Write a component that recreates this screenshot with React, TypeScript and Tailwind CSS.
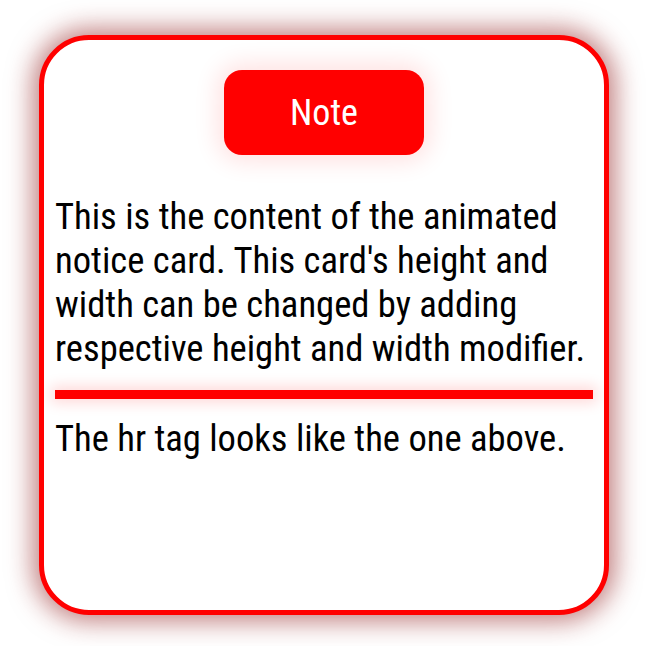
export default function App() {
  return (
    <div className="w-[656px] h-[646px] bg-white pt-[35px] pl-[39px]">
      <div
        className="w-[570px] h-[580px] rounded-[50px] border-[5px] border-[#ff0000] bg-white shadow-[0_0_26px_6px_rgba(140,20,20,0.55)] flex flex-col px-[11px] text-black"
        style={{ fontFamily: 'Roboto, "Liberation Sans", sans-serif', fontStretch: 'condensed' }}
      >
        <div className="flex justify-center pt-[30px]">
          <div className="w-[200px] h-[85px] rounded-[18px] bg-[#ff0000] shadow-[0_0_24px_6px_rgba(255,0,0,0.12)] flex items-center justify-center text-white text-[36px]">
            Note
          </div>
        </div>
        <p className="mt-[40px] text-[36.6px] leading-[44px]">
          This is the content of the animated notice card. This card's height and width can be changed by adding respective height and width modifier.
        </p>
        <hr className="mt-[19px] h-[9px] border-0 bg-[#ff0000] shadow-[0_0_14px_4px_rgba(255,0,0,0.15)]" />
        <p className="mt-[18px] text-[36.6px] leading-[44px]">The hr tag looks like the one above.</p>
      </div>
    </div>
  );
}
